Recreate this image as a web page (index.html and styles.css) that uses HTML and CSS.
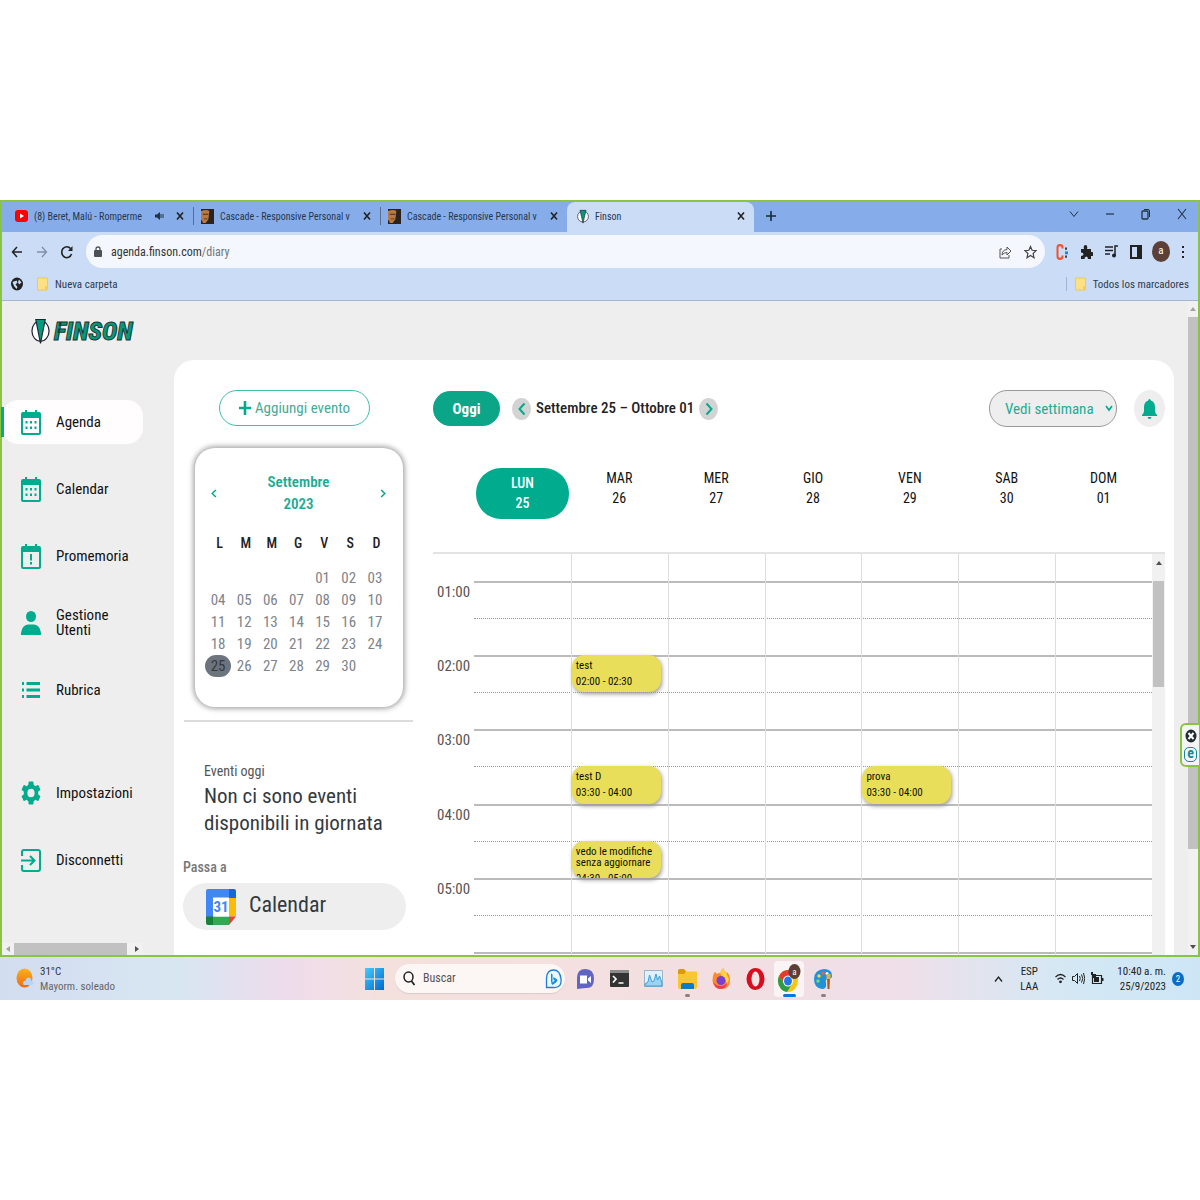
FILE: index.html
```html
<!DOCTYPE html>
<html lang="it">
<head>
<meta charset="utf-8">
<meta name="viewport" content="width=device-width, initial-scale=1">
<title>Finson</title>
<link rel="stylesheet" href="styles.css">
</head>
<body>
<svg class="defs" aria-hidden="true">
  <symbol id="i-cal" viewBox="0 0 20 25" preserveAspectRatio="none"><path fill-rule="evenodd" d="M4 0h2v2h8V0h2v2h2q2 0 2 2v19q0 2-2 2H2q-2 0-2-2V4q0-2 2-2h2zM2 8v15h16V8z"/><path d="M4.500 11h2v2.500h-2zM9 11h2v2.500H9zM13.500 11h2v2.500h-2zM4.500 16.500h2V19h-2zM9 16.500h2V19H9zM13.500 16.500h2V19h-2z"/></symbol>
  <symbol id="i-mark" viewBox="0 0 20 34" preserveAspectRatio="none"><ellipse cx="10" cy="17" rx="9" ry="12.500" fill="#fff" stroke="#223" stroke-width="1.300"/><path d="M5 3h10l-5 29z" fill="#009b7d" stroke="#223" stroke-width="1.200"/></symbol>
  <symbol id="i-close" viewBox="0 0 8 10" preserveAspectRatio="none"><path d="M1 1.500l6 7M7 1.500l-6 7" stroke="#222" stroke-width="1.600"/></symbol>
  <symbol id="i-face" viewBox="0 0 14 16" preserveAspectRatio="none"><path fill="#2b211d" d="M0 0h14v16H0z"/><path fill="#b87a42" d="M0 2q6-2 9 0l-1 9-3 4H2l-1-3H0z"/><path fill="#4e2d14" d="M2 5h6v1H2zM3 10h4v1H3z"/></symbol>
  <symbol id="i-folder" viewBox="0 0 11 14" preserveAspectRatio="none"><path fill="#ffe082" stroke="#ecc95b" d="M.5 1h10v12H.5z"/><path fill="#f6cf50" d="M8 9h3v4H8z"/></symbol>
  <symbol id="i-left" viewBox="0 0 8 14" preserveAspectRatio="none"><path d="M6.500 1.500L1.500 7l5 5.500" fill="none" stroke="currentColor" stroke-width="2"/></symbol>
  <symbol id="i-right" viewBox="0 0 8 14" preserveAspectRatio="none"><path d="M1.500 1.500l5 5.500-5 5.500" fill="none" stroke="currentColor" stroke-width="2"/></symbol>
</svg>

<div class="desktop">
  <div class="browser">
    <div class="tabs">
      <div class="tab">
        <svg width="13" height="12" viewBox="0 0 13 12"><rect width="13" height="12" rx="3" fill="#f00"/><path d="M5 3.500L9 6 5 8.500z" fill="#fff"/></svg>
        <span class="tab-title">(8) Beret, Malú - Romperme</span>
        <svg class="snd" width="9" height="10" viewBox="0 0 9 10"><path d="M0 3.500h2L5 1v8L2 6.500H0z" fill="#234"/><path d="M6 3v4M8 3v4" stroke="#234"/></svg>
        <button class="x" aria-label="Chiudi"><svg width="8" height="10"><use href="#i-close"/></svg></button>
      </div>
      <div class="tab sep">
        <svg width="13" height="15"><use href="#i-face"/></svg>
        <span class="tab-title">Cascade - Responsive Personal v</span>
        <button class="x" aria-label="Chiudi"><svg width="8" height="10"><use href="#i-close"/></svg></button>
      </div>
      <div class="tab sep">
        <svg width="13" height="15"><use href="#i-face"/></svg>
        <span class="tab-title">Cascade - Responsive Personal v</span>
        <button class="x" aria-label="Chiudi"><svg width="8" height="10"><use href="#i-close"/></svg></button>
      </div>
      <div class="tab current">
        <svg width="12" height="15"><use href="#i-mark"/></svg>
        <span class="tab-title">Finson</span>
        <button class="x" aria-label="Chiudi"><svg width="8" height="10"><use href="#i-close"/></svg></button>
      </div>
      <button class="newtab" aria-label="Nuova scheda"><svg width="10" height="12" viewBox="0 0 10 12" preserveAspectRatio="none"><path d="M5 1v10M0 6h10" stroke="#1c2836" stroke-width="1.600"/></svg></button>
      <div class="window-ctl">
        <button aria-label="Schede"><svg width="10" height="8" viewBox="0 0 10 8"><path d="M1 1.500l4 5 4-5" fill="none" stroke="#234"/></svg></button>
        <button aria-label="Riduci"><svg width="10" height="10" viewBox="0 0 10 10"><path d="M1 5h8" stroke="#234" stroke-width="1.200"/></svg></button>
        <button aria-label="Ripristina"><svg width="10" height="12" viewBox="0 0 10 12"><rect x="1" y="3" width="6" height="8" rx="1" fill="none" stroke="#234" stroke-width="1.300"/><path d="M3 1.500h4q1.500 0 1.500 1.500v6" fill="none" stroke="#234"/></svg></button>
        <button aria-label="Chiudi finestra"><svg width="10" height="12" viewBox="0 0 10 12"><path d="M1 1l8 10M9 1L1 11" stroke="#234" stroke-width="1.100"/></svg></button>
      </div>
    </div>

    <div class="toolbar">
      <button class="nav-btn" aria-label="Indietro"><svg width="12" height="12" viewBox="0 0 12 12"><path d="M11 6H1.500M6 1L1.500 6 6 11" fill="none" stroke="#222" stroke-width="1.500"/></svg></button>
      <button class="nav-btn" aria-label="Avanti"><svg width="12" height="12" viewBox="0 0 12 12"><path d="M1 6h9.500M6 1l4.500 5L6 11" fill="none" stroke="#7f8ea6" stroke-width="1.300"/></svg></button>
      <button class="nav-btn" aria-label="Ricarica"><svg width="12" height="14" viewBox="0 0 12 14"><path d="M10.500 9A5 5.500 0 1 1 9.500 3.500" fill="none" stroke="#222" stroke-width="1.600"/><path d="M11.500 1v5H7z" fill="#222"/></svg></button>
      <div class="omnibox">
        <svg width="8" height="12" viewBox="0 0 8 12"><rect y="4" width="8" height="7" rx="1" fill="#4c5157"/><path d="M2 5V3q0-2 2-2t2 2v2" fill="none" stroke="#4c5157" stroke-width="1.300"/></svg>
        <span class="url">agenda.finson.com<span>/diary</span></span>
        <svg width="13" height="14" viewBox="0 0 13 14"><path d="M3 4H1v9h9v-3" fill="none" stroke="#555"/><path d="M3 10q0-5 5-5.500V2l4 4-4 4V7.500Q5 7.500 3 10z" fill="none" stroke="#555"/></svg>
        <svg width="13" height="14" viewBox="0 0 13 14"><path d="M6.500 1.500l1.600 3.800 4 .3-3 2.900.9 4.200-3.500-2.300L3 12.700l.9-4.200-3-2.900 4-.3z" fill="none" stroke="#444" stroke-width="1.200"/></svg>
      </div>
      <div class="ext">
        <svg width="12" height="16" viewBox="0 0 12 14" preserveAspectRatio="none"><path d="M6.500 4V3Q6.500 1 4 1T1.500 3v8q0 2 2.500 2t2.500-2v-1" fill="none" stroke="#f4512c" stroke-width="2"/><path d="M9 3h2v2H9zM9 10h2v2H9z" fill="#345"/><path d="M9 6.500h3V9H9z" fill="#1b84e8"/></svg>
        <svg width="13" height="14" viewBox="0 0 13 14"><path d="M1 4h3q-1-4 1.500-4T7 4h4v3q2.500-.5 2.500 2T11 11v3H8q0-2.500-1.700-2.500T4.500 14H1v-3q2.500 0 2.500-1.700T1 7.500z" fill="#222"/></svg>
        <svg width="13" height="13" viewBox="0 0 13 13"><path d="M0 2h8M0 5.500h8M0 9h5M10 10V1h3" stroke="#222" stroke-width="1.500" fill="none"/><circle cx="9" cy="10.500" r="2" fill="#222"/></svg>
        <svg width="12" height="14" viewBox="0 0 12 14"><path d="M1 1h10v12H1z" fill="none" stroke="#222" stroke-width="2"/><path d="M7 1h4v12H7z" fill="#222"/></svg>
        <span class="avatar">a</span>
        <svg width="4" height="14" viewBox="0 0 4 14"><path d="M1 1h2v2H1zM1 6h2v2H1zM1 11h2v2H1z" fill="#222"/></svg>
      </div>
    </div>

    <div class="bookmarks">
      <svg width="12" height="14" viewBox="0 0 12 14"><ellipse cx="6" cy="7" rx="6" ry="6.500" fill="#222"/><path d="M1.500 5l4-1.500 1 2-2 2 2 2.500-1 2L3 9zM8 2.500l2.500 3L8 7.500 7 5z" fill="#cbdcf7"/></svg>
      <a href="#"><svg width="11" height="14"><use href="#i-folder"/></svg>Nueva carpeta</a>
      <a href="#" class="all"><svg width="11" height="14"><use href="#i-folder"/></svg>Todos los marcadores</a>
    </div>

    <div class="page">
      <div class="app">
        <header class="brand">
          <svg width="19" height="28"><use href="#i-mark"/></svg>
          <span>FINSON</span>
        </header>
        <div class="columns">
          <div class="side">
            <nav>
              <a href="#" class="active"><svg width="20" height="25"><use href="#i-cal"/></svg>Agenda</a>
              <a href="#"><svg width="20" height="25"><use href="#i-cal"/></svg>Calendar</a>
              <a href="#"><svg width="20" height="25" viewBox="0 0 20 25"><path fill-rule="evenodd" d="M4 0h2v2h8V0h2v2h2q2 0 2 2v19q0 2-2 2H2q-2 0-2-2V4q0-2 2-2h2zM2 8v15h16V8z"/><path d="M9 10h2v6.500H9zM9 18h2v2.500H9z"/></svg>Promemoria</a>
              <a href="#"><svg width="20" height="24" viewBox="0 0 20 24"><ellipse cx="10" cy="5.500" rx="5" ry="5.500"/><path d="M0 24v-2q1-8 7-8.500h6q6 .5 7 8.500v2z"/></svg>Gestione Utenti</a>
              <a href="#"><svg width="20" height="16" viewBox="0 0 20 16"><path d="M1 0h2v3H1zM5.500 0H19v3H5.500zM1 6.500h2v3H1zM5.500 6.500H19v3H5.500zM1 13h2v3H1zM5.500 13H19v3H5.500z"/></svg>Rubrica</a>
              <a href="#" class="apart"><svg width="20" height="24" viewBox="2 2 20 20" preserveAspectRatio="none"><path d="M19.140 12.940c.04-.3.060-.61.060-.94 0-.32-.02-.64-.07-.94l2.030-1.580a.49.49 0 0 0 .12-.61l-1.920-3.320a.49.49 0 0 0-.59-.22l-2.390.96c-.5-.38-1.030-.7-1.620-.94l-.36-2.540a.48.48 0 0 0-.48-.41h-3.840c-.24 0-.43.17-.47.41l-.36 2.540c-.59.24-1.130.57-1.620.94l-2.390-.96a.48.48 0 0 0-.59.22L2.740 8.870a.48.48 0 0 0 .12.61l2.030 1.580c-.05.3-.09.63-.09.94s.02.64.07.94l-2.030 1.580a.49.49 0 0 0-.12.61l1.920 3.320c.12.22.37.29.59.22l2.390-.96c.5.38 1.030.7 1.620.94l.36 2.540c.05.24.24.41.48.41h3.840c.24 0 .44-.17.47-.41l.36-2.540c.59-.24 1.130-.56 1.620-.94l2.390.96c.22.08.47 0 .59-.22l1.920-3.320a.48.48 0 0 0-.12-.61zM12 15.600A3.600 3.600 0 1 1 12 8.400a3.600 3.600 0 0 1 0 7.200z"/></svg>Impostazioni</a>
              <a href="#"><svg width="20" height="23" viewBox="0 0 20 23"><path d="M1 7V3q0-2 2-2h14q2 0 2 2v17q0 2-2 2H3q-2 0-2-2v-4M0 11.500h13M9 7l4.500 4.500L9 16" fill="none" stroke="#00ab8e" stroke-width="2"/></svg>Disconnetti</a>
            </nav>
            <div class="hscroll"><i class="tri l"></i><span></span><i class="tri r"></i></div>
          </div>

          <main>
            <section class="left">
              <button class="add"><svg width="12" height="14" viewBox="0 0 12 14"><path d="M6 0v14M0 7h12" stroke="#00ab8e" stroke-width="2.600"/></svg>Aggiungi evento</button>
              <div class="mini">
                <div class="mini-head">
                  <button aria-label="Mese precedente"><svg width="6" height="9"><use href="#i-left"/></svg></button>
                  <h2>Settembre<br>2023</h2>
                  <button aria-label="Mese successivo"><svg width="6" height="9"><use href="#i-right"/></svg></button>
                </div>
                <table>
                  <thead><tr><th>L</th><th>M</th><th>M</th><th>G</th><th>V</th><th>S</th><th>D</th></tr></thead>
                  <tbody>
                    <tr><td></td><td></td><td></td><td></td><td>01</td><td>02</td><td>03</td></tr>
                    <tr><td>04</td><td>05</td><td>06</td><td>07</td><td>08</td><td>09</td><td>10</td></tr>
                    <tr><td>11</td><td>12</td><td>13</td><td>14</td><td>15</td><td>16</td><td>17</td></tr>
                    <tr><td>18</td><td>19</td><td>20</td><td>21</td><td>22</td><td>23</td><td>24</td></tr>
                    <tr><td class="sel">25</td><td>26</td><td>27</td><td>28</td><td>29</td><td>30</td><td></td></tr>
                  </tbody>
                </table>
              </div>
              <hr>
              <div class="today"><h3>Eventi oggi</h3><p>Non ci sono eventi disponibili in giornata</p></div>
              <h4>Passa a</h4>
              <a href="#" class="gcal">
                <svg width="30" height="36" viewBox="0 0 30 36"><path fill="#4285f4" d="M2 0h21v9H8v19H0V2q0-2 2-2z"/><path fill="#1967d2" d="M23 0h5q2 0 2 2v7h-7z"/><path fill="#fbbc04" d="M23 9h7v18.500h-7z"/><path fill="#34a853" d="M7 27.500h16V36H7z"/><path fill="#188038" d="M0 27.500h7V36H2q-2 0-2-2z"/><path fill="#ea4335" d="M23 27.500h7L23 36z"/><path fill="#fff" d="M7 8.500h16v19H7z"/><text x="15" y="23" text-anchor="middle" class="d31">31</text></svg>
                <span>Calendar</span></a>
            </section>

            <section class="week">
              <div class="week-bar">
                <button class="oggi">Oggi</button>
                <button class="round" aria-label="Settimana precedente"><svg width="8" height="14"><use href="#i-left"/></svg></button>
                <h1>Settembre 25 – Ottobre 01</h1>
                <button class="round" aria-label="Settimana successiva"><svg width="8" height="14"><use href="#i-right"/></svg></button>
                <span class="view"><select aria-label="Vista"><option>Vedi settimana</option></select><svg width="8" height="7" viewBox="0 0 8 7"><path d="M1 1l3 4 3-4" fill="none" stroke="#00ab8e" stroke-width="1.700"/></svg></span>
                <button class="bell" aria-label="Notifiche"><svg width="15" height="20" viewBox="0 0 15 20"><path d="M0 17v-1q2-1.500 2-4V8q0-5 4-6.200Q6.500 0 7.500 0T9 1.800Q13 3 13 8v4q0 2.500 2 4v1zM5.500 18h4q-.5 2-2 2t-2-2z" fill="#00ab8e"/></svg></button>
              </div>
              <div class="day-names">
                <div class="now">LUN<br>25</div><div>MAR<br>26</div><div>MER<br>27</div><div>GIO<br>28</div><div>VEN<br>29</div><div>SAB<br>30</div><div>DOM<br>01</div>
              </div>
              <div class="week-body">
                <div class="grid">
                  <div class="time r2">01:00</div><div class="time r4">02:00</div><div class="time r6">03:00</div><div class="time r8">04:00</div><div class="time r10">05:00</div>
                  <div class="line r2"></div><div class="line half r3"></div><div class="line r4"></div><div class="line half r5"></div><div class="line r6"></div><div class="line half r7"></div><div class="line r8"></div><div class="line half r9"></div><div class="line r10"></div><div class="line half r11"></div><div class="line r12"></div>
                  <div class="col c2"></div><div class="col c3"></div><div class="col c4"></div><div class="col c5"></div><div class="col c6"></div><div class="col c7"></div>
                  <div class="event c2 r4"><b>test</b><span>02:00 - 02:30</span></div>
                  <div class="event c2 r7"><b>test D</b><span>03:30 - 04:00</span></div>
                  <div class="event c2 r9"><b>vedo le modifiche senza aggiornare</b><span>04:30 - 05:00</span></div>
                  <div class="event c5 r7"><b>prova</b><span>03:30 - 04:00</span></div>
                </div>
                <div class="vscroll inner"><i class="tri u dark"></i><span></span></div>
              </div>
            </section>
          </main>
        </div>
      </div>
      <div class="vscroll outer"><i class="tri u"></i><span></span><i class="tri d dark"></i></div>
    </div>
    <div class="eset">
      <svg width="12" height="14" viewBox="0 0 12 14"><ellipse cx="6" cy="7" rx="5.500" ry="6.500" fill="#222b33"/><path d="M3.500 4l5 6M8.500 4l-5 6" stroke="#fff" stroke-width="2"/></svg>
      <span>e</span>
    </div>
  </div>

  <footer class="taskbar">
    <div class="weather">
      <svg width="18" height="21" viewBox="0 0 18 21"><defs><linearGradient id="sun" x2="0" y2="1"><stop stop-color="#f9b21d"/><stop offset="1" stop-color="#ee6a12"/></linearGradient></defs><ellipse cx="8.500" cy="10" rx="8" ry="9.500" fill="url(#sun)"/><path d="M8 17q-2-1-.5-3.500 1-1 2-.8 1-3.700 4-3 2 .3 2 3.300 3 .5 2 3-.5 1-2 1z" fill="#b9d4f7"/></svg>
      <p>31°C<br><span>Mayorm. soleado</span></p>
    </div>
    <div class="apps">
      <button aria-label="Inicio" class="start"><svg width="19" height="22" viewBox="0 0 19 22"><defs><linearGradient id="win" x2="1" y2="1"><stop stop-color="#44cdfb"/><stop offset="1" stop-color="#0067d0"/></linearGradient></defs><path fill="url(#win)" d="M0 0h9v10.500H0zM10 0h9v10.500h-9zM0 11.500h9V22H0zM10 11.500h9V22h-9z"/></svg></button>
      <label class="search">
        <svg width="12" height="15" viewBox="0 0 12 15"><ellipse cx="5.500" cy="6" rx="4.500" ry="5" fill="none" stroke="#222" stroke-width="1.500"/><path d="M8.500 10l3 4" stroke="#222" stroke-width="1.800"/></svg>
        <input type="text" placeholder="Buscar" aria-label="Buscar">
        <svg width="17" height="20" viewBox="0 0 17 20"><path d="M1.500 18.500V9Q2 1 8.500 1T16 10t-7.500 8.500z" fill="#eaf8ff" stroke="#1b7de0" stroke-width="1.300"/><path d="M6 4.500l1.500.8v7.500L6 13.500zM8 8l4 2.200q1 1.800-.8 3L7.500 16 6 14l4-2.200-1.300-.7z" fill="#118be8"/></svg>
      </label>
      <button aria-label="Chat"><svg width="19" height="22" viewBox="0 0 19 22"><path d="M1 21V10Q1 1 9.500 1T18 11t-8.500 9z" fill="#6264c4"/><path d="M4 7.500h7v8H4zM12 10.500L15 8v7l-3-2.500z" fill="#fff"/></svg></button>
      <button aria-label="Terminal"><svg width="19" height="17" viewBox="0 0 19 17"><rect width="19" height="17" rx="1" fill="#333"/><path d="M0 0h19v3H0z" fill="#8b8b8b"/><path d="M3 6l3 3-3 3.500M8.500 13h5" fill="none" stroke="#fff" stroke-width="1.700"/></svg></button>
      <button aria-label="Monitor"><svg width="19" height="17" viewBox="0 0 19 17"><path d="M.5.5h18v16H.5z" fill="#e0f1fb" stroke="#9ab5c8"/><path d="M1 14l3-2 1.500-7L8 12l2-1 2-7 1.500 6 2-4 2.500 7v3H1z" fill="#98d5f4" stroke="#3e9dd6"/></svg></button>
      <button aria-label="Archivos" class="run"><svg width="19" height="20" viewBox="0 0 19 20"><path d="M0 2q0-2 2-2h4l2 2.500h11V18q0 2-2 2H2q-2 0-2-2z" fill="#fcc62f"/><path d="M0 2q0-2 2-2h4l2 2.500L6 5H0z" fill="#d99a0a"/><path d="M3 20v-4q0-2 2-2h9q2 0 2 2v4z" fill="#1079c9"/></svg></button>
      <button aria-label="Firefox"><svg width="19" height="22" viewBox="0 0 19 22"><path d="M2 5l1-1 2 2q1-1 3-1 1-3 3.500-5 0 3 3 5l.5-1q3 3 3 8 0 9-8.500 9T.5 12q0-4 1.500-7z" fill="#ff8a2b"/><path d="M11.500 0q0 3 3 5l1 3 1.500 3-2 6q-1-8-5-8.500L8 5q1-3 3.500-5z" fill="#ffd23f"/><ellipse cx="9" cy="12.500" rx="4.500" ry="4.500" fill="#7b3fd0"/><path d="M.5 12q2 6 8 6 5 0 7-4-1 7-7 7T.5 12z" fill="#f2385a"/></svg></button>
      <button aria-label="Opera"><svg width="19" height="22" viewBox="0 0 19 22"><ellipse cx="9.500" cy="11" rx="9" ry="11" fill="#d80d1f"/><ellipse cx="9.500" cy="11" rx="4" ry="7.500" fill="#f5e3e3"/></svg></button>
      <button aria-label="Chrome" class="open"><svg width="24" height="30" viewBox="0 0 24 30"><ellipse cx="11" cy="17" rx="10" ry="11" fill="#fbc516"/><path d="M2 12Q-1 19 4 25q3 3 6 3l5-8-8-1z" fill="#2a9c4a"/><path d="M11 6Q5 6 2 12l5 7 4-7h9q-3-6-9-6z" fill="#e33b2e"/><ellipse cx="11" cy="17" rx="5" ry="5.500" fill="#fff"/><ellipse cx="11" cy="17" rx="4" ry="4.500" fill="#2375e8"/><ellipse cx="17.500" cy="7.500" rx="6" ry="7.500" fill="#5c4038"/><text x="17.500" y="10.500" text-anchor="middle" class="mini-a">a</text></svg></button>
      <button aria-label="Paint" class="run"><svg width="19" height="22" viewBox="0 0 19 22"><path d="M10 1q8 0 8 7 0 3-4 3-3 0-2 4 1 6-4 6-8-1-8-10T10 1z" fill="#2292d8"/><circle cx="5" cy="8" r="1.700" fill="#ffd23f"/><circle cx="9" cy="5" r="1.700" fill="#f35b4b"/><circle cx="4" cy="13" r="1.700" fill="#7ddb6b"/><circle cx="13" cy="5.500" r="1.500" fill="#fff"/><path d="M13 8h3l-.5 13h-2z" fill="#a65a21"/><path d="M12.500 6h4v5h-4z" fill="#e4b04a"/></svg></button>
    </div>
    <div class="tray">
      <svg width="9" height="8" viewBox="0 0 9 8"><path d="M1 6.500L4.500 2 8 6.500" fill="none" stroke="#222" stroke-width="1.300"/></svg>
      <p>ESP<br>LAA</p>
      <div class="status">
        <svg width="11" height="12" viewBox="0 0 11 12"><path d="M.5 5q5-5 10 0M2.500 7.500q3-3 6 0" fill="none" stroke="#222" stroke-width="1.200"/><circle cx="5.500" cy="9.800" r="1.400" fill="#222"/></svg>
        <svg width="13" height="13" viewBox="0 0 13 13"><path d="M.5 4.500h2l3-3v10l-3-3h-2z" fill="none" stroke="#222"/><path d="M7.500 4q1.500 2.500 0 5M9.500 2.500q2.500 4 0 8M11.500 1q2.500 5.500 0 11" fill="none" stroke="#222"/></svg>
        <svg width="13" height="13" viewBox="0 0 13 13"><path d="M1.500 3.500h9v8h-9z" fill="none" stroke="#222" stroke-width="1.200"/><path d="M3 5h5v5H3zM11 6h1.500v3H11zM0 0h2v2h3v4H1V3H0z" fill="#222"/></svg>
      </div>
      <p class="clock">10:40 a. m.<br>25/9/2023</p>
      <span class="count">2</span>
    </div>
  </footer>
</div>
</body>
</html>
```
FILE: styles.css
```css
* { box-sizing: border-box; }
body {
  margin: 0;
  min-height: 100vh;
  display: flex;
  align-items: center;
  background: #fff;
  color: #222;
  font-family: "Roboto Condensed", Roboto, "Liberation Sans", sans-serif;
  font-size: 15px;
}
h1, h2, h3, h4, p { margin: 0; font-weight: 400; }
a { color: inherit; text-decoration: none; }
button { padding: 0; border: 0; background: none; color: inherit; font: inherit; }
svg { display: block; flex: none; }
.defs { position: absolute; width: 0; height: 0; }
.desktop { width: 100%; }
.browser { position: relative; border: 2px solid #8bc53f; }

/* tab strip */
.tabs { display: flex; height: 30px; background: #86adea; font-size: 10px; color: #26364c; }
.tab { flex: 0 1 187px; min-width: 0; display: flex; align-items: center; gap: 6px; padding: 0 8px 2px 13px; position: relative; }
.tab:not(.sep):not(.current) { flex-basis: 191px; }
.tab.sep { padding-left: 8px; }
.tab.sep::before { content: ""; position: absolute; left: 0; top: 5px; height: 18px; width: 1px; background: #5a6f90; }
.tab.current { background: #cbdcf7; border-radius: 8px 8px 0 0; padding-left: 10px; }
.tab-title { flex: 1; white-space: nowrap; }
.x { width: 10px; display: flex; justify-content: center; }
.snd + .x { margin-left: 5px; }
.newtab { width: 34px; display: flex; align-items: center; justify-content: center; padding-bottom: 2px; }
.window-ctl { margin-left: auto; display: flex; align-items: center; gap: 26px; padding: 0 11px 6px 0; }

/* address bar */
.toolbar { display: flex; align-items: center; height: 36px; padding: 3px 13px 0 9px; background: #cbdcf7; }
.nav-btn { width: 25px; padding-right: 13px; }
.omnibox { flex: 1; height: 33px; display: flex; align-items: center; gap: 12px; padding: 0 8px 0 8px; background: #f4f8fe; border-radius: 17px; }
.url { flex: 1; margin-left: -3px; font-size: 12px; color: #333; }
.url span { color: #70757a; }
.ext { display: flex; align-items: center; gap: 12px; padding-left: 11px; }
.avatar { width: 18px; height: 21px; border-radius: 50%; background: #5c4037; color: #fff; font-size: 11px; line-height: 20px; text-align: center; margin: 0 -1px 0 -2px; }
.bookmarks { display: flex; align-items: center; gap: 14px; height: 33px; padding: 0 9px; background: #cbdcf7; border-bottom: 1px solid #a5b5cf; font-size: 11px; color: #2f3b4c; }
.bookmarks a { display: flex; align-items: center; gap: 7px; }
.bookmarks .all { margin-left: auto; padding-left: 8px; border-left: 1px solid #9fb4d6; }

/* page */
.page { display: flex; background: #eee; }
.app { flex: 1; min-width: 0; display: flex; flex-direction: column; }
.brand { display: flex; align-items: center; gap: 4px; height: 59px; padding-left: 29px; }
.brand span { font-size: 26px; font-weight: 800; font-style: italic; color: #009b7d; -webkit-text-stroke: 1px #22332f; }
.columns { flex: 1; display: flex; }
.side { width: 172px; flex: none; display: flex; flex-direction: column; padding-top: 40px; }
nav { display: flex; flex-direction: column; gap: 23px; width: 141px; color: #111; line-height: 15px; }
nav a { position: relative; display: flex; align-items: center; gap: 15px; height: 44px; padding: 0 36px 0 19px; }
nav a.active { background: #fffdfe; border-radius: 16px; }
nav a.active::before { content: ""; position: absolute; left: -1px; top: 7px; width: 3px; height: 30px; background: #00ab8e; }
nav a.apart { margin-top: 36px; }
nav svg { fill: #00ab8e; }
.hscroll { display: flex; align-items: center; justify-content: space-between; width: 141px; height: 12px; margin-top: auto; padding: 0 4px; background: #f1f1f1; }
.hscroll span { flex: 1; align-self: stretch; margin: 0 8px 0 4px; background: #c1c1c1; }
.tri { border: 3px solid transparent; }
.tri.l { border-right: 4px solid #a3a3a3; border-left: 0; }
.tri.r { border-left: 4px solid #505050; border-right: 0; }
.tri.u { border-bottom: 4px solid #a3a3a3; border-top: 0; }
.tri.d { border-top: 4px solid #505050; border-bottom: 0; }
.tri.u.dark { border-bottom-color: #505050; }
.vscroll { display: flex; flex-direction: column; align-items: center; background: #f1f1f1; }
.vscroll span { align-self: stretch; background: #c1c1c1; }
.outer { width: 10px; padding: 6px 0; }
.outer span { height: 532px; margin: 6px 0 auto; }

main { flex: 1; min-width: 0; display: flex; gap: 20px; margin-right: 14px; padding: 30px 9px 0; background: #fff; border-radius: 20px 20px 0 0; }
.left { width: 230px; flex: none; }
.add { display: flex; align-items: center; justify-content: center; gap: 4px; width: 151px; height: 36px; margin-left: 36px; border: 1px solid #3cc0a8; border-radius: 18px; color: #45ab96; }
.mini { width: 208px; margin: 22px 0 0 12px; padding: 23px 15px 30px 10px; border-radius: 20px; box-shadow: 0 0 5px 2px #aaa; }
.mini-head { display: flex; align-items: center; justify-content: space-between; padding: 0 2px 0 6px; color: #00ab8e; }
h2 { font-size: 15px; line-height: 22px; font-weight: 600; text-align: center; color: #1bad93; }
table { width: 100%; margin-top: 4px; border-collapse: collapse; table-layout: fixed; font-size: 15px; text-align: center; color: #7d848a; }
th { height: 48px; padding: 0 0 0 3px; font-size: 14px; font-weight: 500; color: #222; }
td { height: 22px; padding: 0; line-height: 22px; }
td.sel { background: #6c757d; border-radius: 11px; color: #343a40; }
hr { height: 2px; margin: 13px 0 0 1px; border: 0; background: #dcdcdc; }
.today { padding: 37px 0 0 21px; }
h3 { font-size: 14px; line-height: 24px; color: #555; }
.today p { font-size: 21px; line-height: 27px; color: #333a40; }
h4 { margin-top: 21px; font-size: 14px; line-height: 18px; font-weight: 500; color: #777; }
.gcal { display: flex; align-items: center; gap: 13px; width: 223px; height: 47px; margin-top: 7px; padding: 0 22px 0 23px; border-radius: 24px; background: #eee; font-size: 22px; line-height: 24px; color: #333a40; }
.gcal span { padding-bottom: 4px; }
.d31 { font-size: 15px; font-weight: 700; fill: #4285f4; }

/* week view */
.week { flex: 1; min-width: 0; display: flex; flex-direction: column; }
.week-bar { display: flex; align-items: center; height: 37px; }
.oggi { width: 67px; height: 35px; border-radius: 18px; background: #0ba688; color: #fff; font-weight: 700; margin-right: 12px; }
.round { display: flex; align-items: center; justify-content: center; width: 19px; height: 22px; border-radius: 50%; background: #d3d3d3; color: #00ab8e; }
h1 { margin: 0 5px 2px; font-size: 15px; line-height: 22px; font-weight: 500; color: #222; }
.view { position: relative; margin-left: auto; }
.view select { appearance: none; width: 128px; height: 37px; padding: 0 15px; border: 1px solid #999; border-radius: 18px; background: #eee; color: #1bad93; font: inherit; }
.view svg { position: absolute; right: 4px; top: 15px; }
.bell { display: flex; align-items: center; justify-content: center; width: 31px; height: 37px; margin-left: 17px; border-radius: 50%; background: #eee; }
.day-names { display: grid; grid-template-columns: repeat(7, 1fr); height: 51px; margin: 41px 13px 33px 41px; text-align: center; font-size: 14px; line-height: 20px; color: #111; }
.day-names .now { margin: 0 2px; padding-top: 5px; border-radius: 25px; background: #00ab8e; color: #fff; font-weight: 500; }
.week-body { flex: 1; display: flex; border-top: 2px solid #e3e3e3; }
.grid { flex: 1; min-height: 401px; display: grid; grid-template-columns: 41px repeat(7, minmax(0, 1fr)); grid-template-rows: 27px repeat(10, minmax(0, 1fr)) 3px; }
.time { grid-column: 1; padding-left: 4px; line-height: 22px; font-size: 15px; color: #555; }
.line { grid-column: 2 / -1; border-top: 2px solid #bbb; }
.half { border-top: 1px dotted #999; }
.col { grid-row: 1 / -1; border-left: 1px solid #ddd; }
.c2 { grid-column: 3; } .c3 { grid-column: 4; } .c4 { grid-column: 5; } .c5 { grid-column: 6; } .c6 { grid-column: 7; } .c7 { grid-column: 8; }
.r2 { grid-row: 2; } .r3 { grid-row: 3; } .r4 { grid-row: 4; } .r5 { grid-row: 5; } .r6 { grid-row: 6; } .r7 { grid-row: 7; } .r8 { grid-row: 8; } .r9 { grid-row: 9; } .r10 { grid-row: 10; } .r11 { grid-row: 11; } .r12 { grid-row: 12; }
.event { contain: size; overflow: hidden; margin: 0 7px 0 1px; padding: 5px 0 0 4px; border-radius: 12px; background: #e8de5a; box-shadow: 1px 2px 4px #999; font-size: 11px; line-height: 11px; color: #110; }
.event b { display: block; margin-bottom: 5px; font-weight: 400; }
.inner { width: 13px; padding-top: 7px; }
.inner span { height: 106px; margin: 16px 1px 0; }

.eset { position: absolute; right: -1px; top: 521px; width: 19px; height: 44px; display: flex; flex-direction: column; align-items: center; gap: 4px; padding-top: 4px; border: 2px solid #8bc53f; border-right: 0; border-radius: 6px 0 0 6px; background: #f4f4f4; }
.eset span { width: 13px; height: 15px; border: 1px solid #158796; border-radius: 5px; color: #158796; font-size: 14px; line-height: 11px; font-weight: 700; text-align: center; }

/* taskbar */
.taskbar { display: flex; justify-content: space-between; height: 43px; padding: 0 16px; background: linear-gradient(90deg, #d2ddf0, #d8e6f2 15%, #efdcec 24%, #f4e1dd 32%, #f3dfe2 60%, #efdfe9 75%, #d5e8f4 88%, #cde6f6); font-size: 11px; line-height: 15px; }
.weather { display: flex; align-items: center; gap: 6px; width: 344px; flex: none; color: #333; }
.weather span { color: #666; }
.apps { display: flex; align-items: center; flex: none; }
.apps button { display: flex; align-items: center; justify-content: center; width: 30px; height: 36px; margin-left: 4px; position: relative; }
.apps .start { width: 20px; }
.search { display: flex; align-items: center; gap: 8px; width: 170px; height: 29px; margin: 0 1px 0 11px; padding: 0 3px 0 8px; border-radius: 15px; background: #fcf6f5; box-shadow: 0 1px 1px #dccbcb; }
.search input { flex: 1; width: 0; min-width: 0; padding: 0; border: 0; background: none; font: inherit; font-size: 12px; }
.search input::placeholder { color: #555; opacity: 1; }
.open { background: #fbf4f5; border-radius: 4px; }
.apps .open { background: #fbf4f5; }
.run::after, .open::after { content: ""; position: absolute; bottom: 0; width: 5px; height: 3px; border-radius: 2px; background: #8a8083; }
.open::after { width: 13px; background: #0a78d4; }
.mini-a { font-size: 9px; fill: #fff; }
.tray { display: flex; align-items: center; margin-left: auto; gap: 17px; text-align: center; color: #222; }
.status { display: flex; gap: 6px; }
.clock { text-align: right; margin-left: -4px; }
.count { width: 12px; height: 14px; margin-left: -11px; border-radius: 50%; background: #0a6cc8; color: #fff; font-size: 9px; line-height: 14px; }
```
